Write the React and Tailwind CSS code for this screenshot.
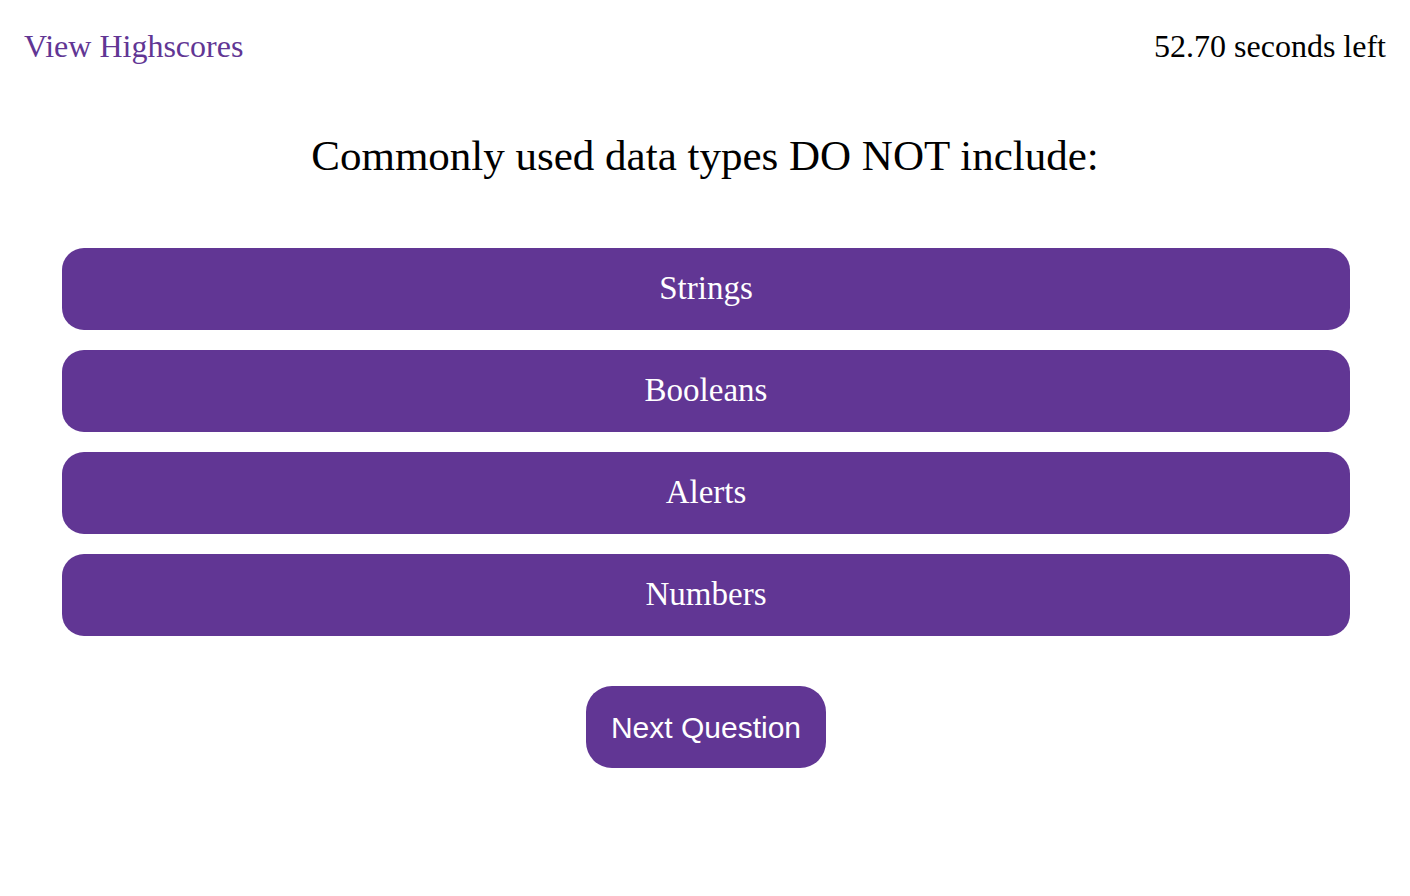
import React from 'react';

const answers = ['Strings', 'Booleans', 'Alerts', 'Numbers'];

export default function App() {
  return (
    <div className="min-h-screen bg-white font-['Liberation_Serif',serif] text-black">
      <header className="flex items-center justify-between px-6 pt-[28px] text-[32px] leading-[36px]">
        <a href="#" className="text-[#613694]">View Highscores</a>
        <span>52.70 seconds left</span>
      </header>

      <main className="flex flex-col items-center">
        <h1 className="mt-[68px] text-[43px] leading-[48px]">Commonly used data types DO NOT include:</h1>

        <div className="mt-[68px] flex w-full flex-col gap-5 pl-[62px] pr-[60px]">
          {answers.map((a) => (
            <button
              key={a}
              className="h-[82px] w-full rounded-[22px] bg-[#613694] text-[33px] text-white"
            >
              {a}
            </button>
          ))}
        </div>

        <button className="ml-[2px] mt-[50px] h-[82px] w-[240px] rounded-[26px] bg-[#613694] font-['Liberation_Sans',sans-serif] text-[30px] text-white">
          Next Question
        </button>
      </main>
    </div>
  );
}
